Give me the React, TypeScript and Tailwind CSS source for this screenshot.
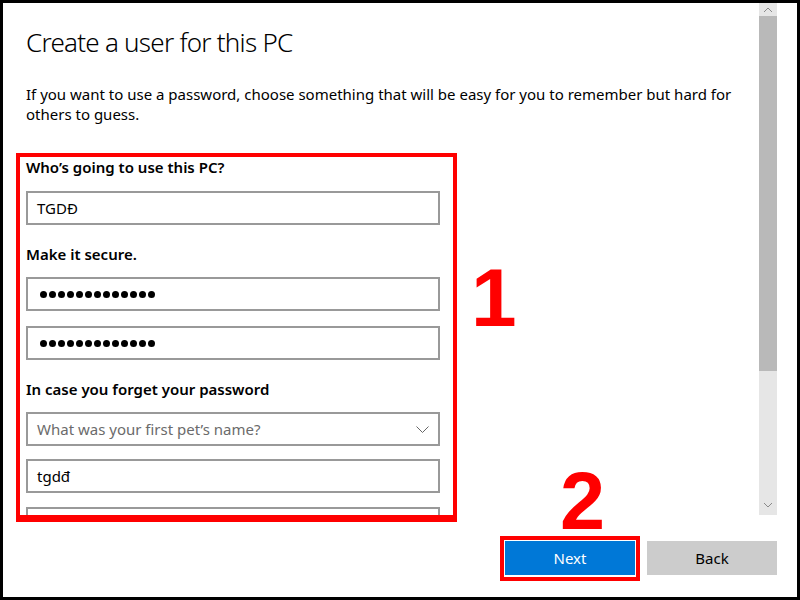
import React from "react";

const Dots = () => (
  <div className="flex gap-[2px]">
    {Array.from({ length: 13 }).map((_, i) => (
      <div key={i} className="w-[7px] h-[7px] rounded-full bg-black" />
    ))}
  </div>
);

const Field = ({ children, className = "" }: { children?: React.ReactNode; className?: string }) => (
  <div
    className={
      "w-[414px] h-[34px] shrink-0 border-2 border-[#999999] bg-white flex items-center pl-[9px] pr-[8px] text-[15px] text-black " +
      className
    }
  >
    {children}
  </div>
);

export default function App() {
  return (
    <div
      className="w-[800px] h-[600px] bg-black p-[3px]"
      style={{ fontFamily: '"Noto Sans", "Open Sans", sans-serif' }}
    >
      <div className="relative w-full h-full bg-white flex flex-col overflow-hidden">
        <div className="flex h-[512px] shrink-0">
          <div className="flex-1 overflow-hidden pl-[23px] pt-[23px] flex flex-col">
            <h1 className="text-[26px] leading-[32px] font-light tracking-[-0.75px] text-black">Create a user for this PC</h1>
            <p className="mt-[26px] text-[15px] leading-[20px] text-black">
              If you want to use a password, choose something that will be easy for you to remember but hard for
              <br />
              others to guess.
            </p>
            <div className="mt-[33px] text-[15px] leading-[20px] font-semibold text-black">Who’s going to use this PC?</div>
            <Field className="mt-[14px]">TGDĐ</Field>
            <div className="mt-[19px] text-[15px] leading-[20px] font-semibold text-black">Make it secure.</div>
            <Field className="mt-[13px] pl-[12px]">
              <Dots />
            </Field>
            <Field className="mt-[15px] pl-[12px]">
              <Dots />
            </Field>
            <div className="mt-[19px] text-[15px] leading-[20px] font-semibold text-black">In case you forget your password</div>
            <Field className="mt-[13px] justify-between">
              <span className="text-[#6b6b6b]">What was your first pet’s name?</span>
              <svg width="13" height="7" viewBox="0 0 13 7" className="mr-[1px]">
                <path d="M0.5 0.5 L6.5 6.5 L12.5 0.5" fill="none" stroke="#666" strokeWidth="1" />
              </svg>
            </Field>
            <Field className="mt-[13px]">tgdđ</Field>
            <Field className="mt-[14px]" />
          </div>
          <div className="w-[18px] flex flex-col bg-[#e6e6e6] shrink-0">
            <div className="h-[13px] flex items-center justify-center">
              <svg width="10" height="6" viewBox="0 0 10 6">
                <path d="M1 5 L5 1 L9 5" fill="none" stroke="#8a8a8a" strokeWidth="1" />
              </svg>
            </div>
            <div className="h-[355px] bg-[#b9b9b9]" />
            <div className="flex-1 flex items-end justify-center pb-[7px]">
              <svg width="10" height="6" viewBox="0 0 10 6">
                <path d="M1 1 L5 5 L9 1" fill="none" stroke="#8a8a8a" strokeWidth="1" />
              </svg>
            </div>
          </div>
          <div className="w-[20px] shrink-0" />
        </div>
        <div className="flex justify-end gap-[12px] pr-[20px] pt-[26px]">
          <button className="w-[130px] h-[34px] bg-[#0078d7] text-white text-[15px]">Next</button>
          <button className="w-[130px] h-[34px] bg-[#cccccc] text-black text-[15px]">Back</button>
        </div>

        <div className="absolute left-[13px] top-[150px] w-[441px] h-[369px] border-4 border-b-[7px] border-[#ff0000] pointer-events-none" />
        <div className="absolute left-[497px] top-[533px] w-[140px] h-[45px] border-4 border-[#ff0000] pointer-events-none" />
        <div
          className="absolute left-[468px] top-[254px] text-[82px] leading-[82px] font-bold text-[#ff0000]"
          style={{ fontFamily: '"Liberation Sans", Arial, sans-serif' }}
        >
          1
        </div>
        <div
          className="absolute left-[557px] top-[458px] text-[81px] leading-[81px] font-bold text-[#ff0000]"
          style={{ fontFamily: '"Liberation Sans", Arial, sans-serif' }}
        >
          2
        </div>
      </div>
    </div>
  );
}
